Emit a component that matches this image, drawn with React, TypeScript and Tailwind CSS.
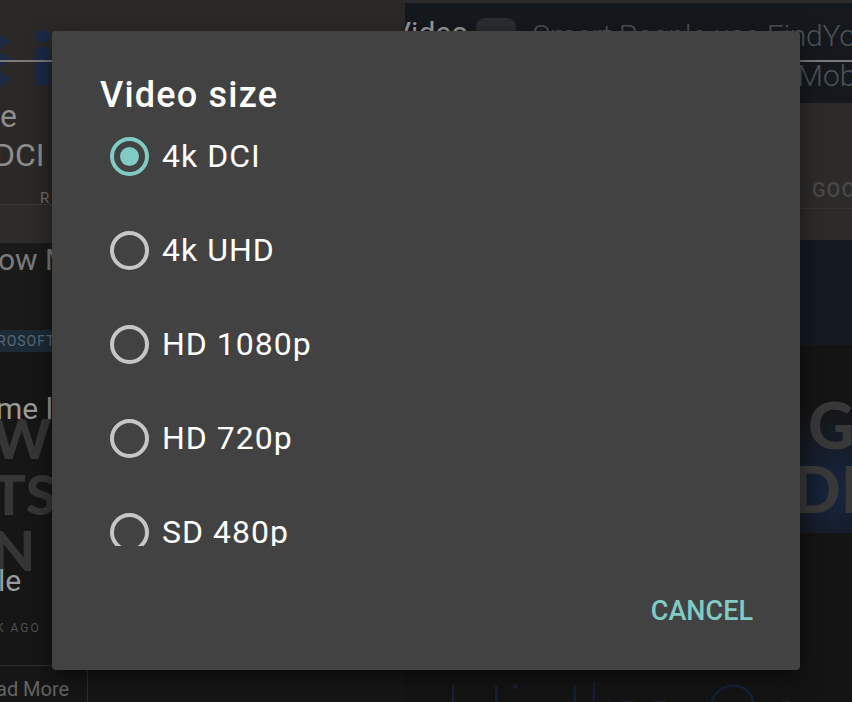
import React from "react";

function Radio({ checked }: { checked: boolean }) {
  return checked ? (
    <span className="w-[39px] h-[39px] shrink-0 rounded-full border-[4px] border-[#80cbc4] flex items-center justify-center">
      <span className="w-[19px] h-[19px] rounded-full bg-[#80cbc4]" />
    </span>
  ) : (
    <span className="w-[39px] h-[39px] shrink-0 rounded-full border-[4px] border-[#c6c6c6]" />
  );
}

export default function App() {
  const options = ["4k DCI", "4k UHD", "HD 1080p", "HD 720p", "SD 480p"];
  return (
    <div className="relative w-[852px] h-[702px] overflow-hidden bg-[#141414] font-['Roboto',sans-serif]">
      {/* dimmed page behind the dialog */}
      <div className="flex h-full">
        {/* left column */}
        <div className="w-[405px] shrink-0 flex flex-col overflow-hidden">
          <div className="h-[205px] shrink-0 bg-[#2a2927] border-b-[1px] border-[#3b3a38] flex flex-col overflow-hidden">
            <div className="mt-[27px] h-[64px] shrink-0 flex items-start">
              <svg width="16" height="64" viewBox="0 0 16 64" className="shrink-0">
                <path d="M0 8 L10 14 L0 22 Z" fill="#1d2a44" />
                <path d="M0 26 L12 32 L0 40 Z" fill="#1d2a44" />
                <path d="M0 44 L10 52 L0 60 Z" fill="#1d2a44" />
              </svg>
              <svg width="20" height="64" viewBox="0 0 20 64" className="ml-[17px] shrink-0">
                <rect x="3" y="4" width="13" height="11" rx="2" fill="#1b2947" />
                <rect x="3" y="20" width="13" height="38" fill="#1b2947" />
              </svg>
            </div>
            <div className="mt-[7px] text-[32px] leading-[36px] text-[#8d8d8d] whitespace-nowrap">e</div>
            <div className="mt-[3px] -ml-[6px] text-[32px] leading-[36px] text-[#8d8d8d] whitespace-nowrap">DCI</div>
            <div className="mt-[16px] ml-[40px] text-[15px] leading-[18px] text-[#6f6f6f] whitespace-nowrap">R</div>
          </div>
          <div className="h-[38px] shrink-0 bg-[#2d2c2b]" />
          <div className="h-[87px] shrink-0 bg-[#1a1a1a] overflow-hidden">
            <div className="-ml-[2px] text-[30px] leading-[34px] text-[#7a7a7a] whitespace-nowrap">ow M</div>
          </div>
          <div className="h-[22px] shrink-0 bg-[#1d2b36] flex items-center overflow-hidden">
            <span className="-ml-[3px] text-[14px] leading-[14px] tracking-[1px] text-[#56697a] whitespace-nowrap">ROSOFT</span>
          </div>
          <div className="flex-1 bg-[#161616] flex flex-col overflow-hidden">
            <div className="relative">
              <div className="pt-[58px] -ml-[8px] flex flex-col text-[56px] leading-[56px] font-black text-[#363636] font-['Lato',sans-serif] whitespace-nowrap">
                <span>WH</span>
                <span>TS</span>
                <span>N</span>
              </div>
              <div className="absolute left-[-4px] top-[40px] text-[30px] leading-[34px] text-[#9a9a9a] whitespace-nowrap">me la</div>
              <div className="absolute left-[-2px] top-[212px] text-[30px] leading-[34px] text-[#9a9a9a] whitespace-nowrap">le</div>
            </div>
            <div className="mt-[43px] -ml-[4px] text-[12px] leading-[14px] tracking-[2px] text-[#505050] whitespace-nowrap">K AGO</div>
            <div className="mt-[30px] w-[88px] flex-1 border-t border-r border-[#2f2f2f] flex items-start overflow-hidden">
              <span className="mt-[12px] -ml-[4px] text-[20px] leading-[22px] text-[#646464] whitespace-nowrap">ad More</span>
            </div>
          </div>
        </div>
        {/* right column */}
        <div className="flex-1 min-w-0 flex flex-col overflow-hidden">
          <div className="h-[3px] shrink-0 bg-[#2a2a2a]" />
          <div className="h-[100px] shrink-0 bg-[#15191e] flex flex-col whitespace-nowrap">
            <div className="flex items-start mt-[13px]">
              <span className="-ml-[13px] text-[30px] leading-[34px] text-[#9a9a9a]">Video</span>
              <span className="ml-[8px] mt-[2px] w-[40px] h-[18px] shrink-0 rounded-[9px] bg-[#2a2c30]" />
              <span className="ml-[16px] mt-[2px] text-[30px] leading-[36px] font-light tracking-[-0.3px] text-[#4c5157]">Smart People use FindYour</span>
            </div>
            <div className="mt-[4px] ml-[392px] text-[30px] leading-[36px] font-light text-[#4c5157]">Mobile</div>
          </div>
          <div className="h-[137px] shrink-0 bg-[#2c2b29] flex flex-col">
            <div className="mt-[76px] ml-[407px] text-[20px] leading-[22px] font-medium tracking-[1px] text-[#484848] whitespace-nowrap">GOOGLE</div>
            <div className="mt-[7px] h-[1px] bg-[#353432]" />
          </div>
          <div className="h-[105px] shrink-0 bg-[#141922]" />
          <div className="flex-1 bg-[#141414] flex flex-col whitespace-nowrap">
            <div className="ml-[395px] mt-[48px] h-[140px] w-[120px] shrink-0 bg-[radial-gradient(ellipse_at_30%_70%,#17253f_0%,#141414_65%)] flex flex-col text-[64px] leading-[64px] font-black text-[#383838] font-['Lato',sans-serif]">
              <span className="ml-[8px]">G</span>
              <span className="-ml-[8px]">DI</span>
            </div>
            <div className="mt-[142px] ml-[38px] text-[90px] leading-[90px] font-thin text-[#17213a]">Hi, I'm Co</div>
          </div>
        </div>
      </div>
      {/* header underline across the page */}
      <div className="absolute left-0 top-[60px] w-[852px] h-[2px] bg-[#7a7a7a]" />

      {/* dialog */}
      <div className="absolute left-[52px] top-[31px] w-[748px] h-[639px] bg-[#424242] rounded-[4px] shadow-[0_8px_24px_rgba(0,0,0,0.5)] flex flex-col">
        <div className="pt-[51px] pl-[48px] text-[36px] leading-[27px] tracking-[1.2px] font-medium text-white">Video size</div>
        <div className="h-[437px] overflow-hidden flex flex-col">
          {options.map((o, i) => (
            <div key={o} className="h-[94px] shrink-0 flex items-center pl-[58px]">
              <Radio checked={i === 0} />
              <span className="ml-[13px] text-[32px] tracking-[1px] text-white">{o}</span>
            </div>
          ))}
        </div>
        <div className="flex justify-end pt-[45px] pr-[47px]">
          <span className="text-[27px] font-medium text-[#80cbc4]">CANCEL</span>
        </div>
      </div>
    </div>
  );
}
